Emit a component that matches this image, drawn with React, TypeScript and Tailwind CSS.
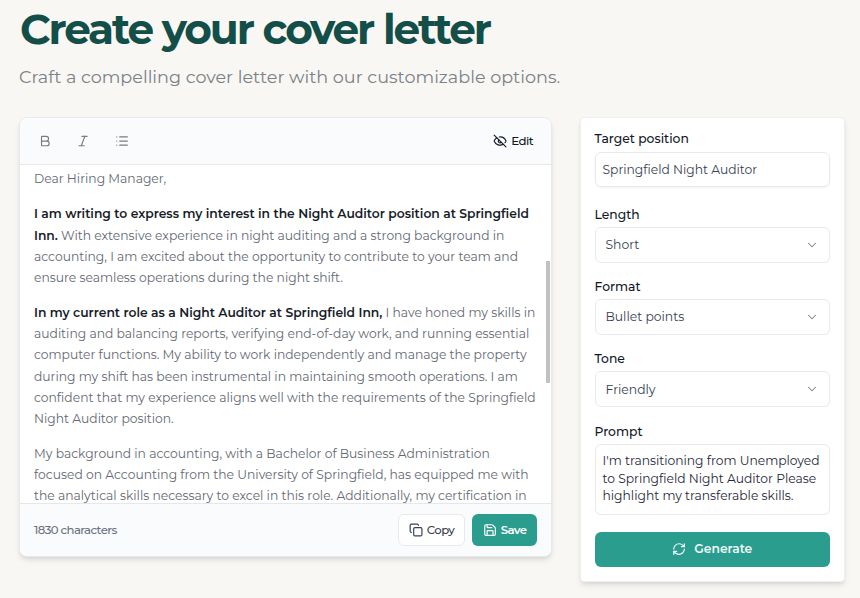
import type { ReactNode } from 'react'
import { Bold, ChevronDown, Copy, EyeOff, Italic, List, RefreshCw, Save } from 'lucide-react'

const selects = [
  { label: 'Length', value: 'Short' },
  { label: 'Format', value: 'Bullet points' },
  { label: 'Tone', value: 'Friendly' },
]

function Field({ label, children }: { label: string; children: ReactNode }) {
  return (
    <div className="flex flex-col gap-[3px]">
      <span className="text-[12.35px] leading-[18px] font-medium text-[#111827]">{label}</span>
      {children}
    </div>
  )
}

function Toolbar() {
  return (
    <div className="flex h-[47px] shrink-0 items-center justify-between border-b border-[#e5e7eb] bg-[#fafbfd] pr-[18px] pl-[17.5px]">
      <div className="flex items-center gap-[24.6px] text-[#7b7c7f]">
        <Bold className="size-[14.1px]" />
        <Italic className="size-[14.1px]" />
        <List className="size-[14.1px]" />
      </div>
      <button
        type="button"
        className="flex items-center gap-1 pt-px text-[11.8px] font-medium tracking-[-0.05em] text-[#111827]"
      >
        <EyeOff className="size-[14.1px]" />
        Edit
      </button>
    </div>
  )
}

function Letter() {
  return (
    <div className="flex min-h-0 flex-1 flex-col gap-[14px] overflow-hidden pt-[3.3px] pl-3.5 text-[12.32px] leading-[21.15px] whitespace-nowrap text-[#636973] [&_strong]:font-semibold [&_strong]:text-[#161c28]">
      <p>Dear Hiring Manager,</p>
      <p>
        <strong>
          I am writing to express my interest in the Night Auditor position at Springfield
          <br />
          Inn.
        </strong>{' '}
        With extensive experience in night auditing and a strong background in
        <br />
        accounting, I am excited about the opportunity to contribute to your team and
        <br />
        ensure seamless operations during the night shift.
      </p>
      <p>
        <strong>In my current role as a Night Auditor at Springfield Inn,</strong> I have honed my
        skills in
        <br />
        auditing and balancing reports, verifying end-of-day work, and running essential
        <br />
        computer functions. My ability to work independently and manage the property
        <br />
        during my shift has been instrumental in maintaining smooth operations. I am
        <br />
        confident that my experience aligns well with the requirements of the Springfield
        <br />
        Night Auditor position.
      </p>
      <p>
        My background in accounting, with a Bachelor of Business Administration
        <br />
        focused on Accounting from the University of Springfield, has equipped me with
        <br />
        the analytical skills necessary to excel in this role. Additionally, my certification in
      </p>
    </div>
  )
}

export default function App() {
  return (
    <div className="h-[598px] w-[860px] overflow-hidden bg-[#f8f7f3] pl-[19px] font-['Montserrat','Inter',sans-serif]">
      <h1 className="ml-px w-fit pt-[5px] text-[42.2px] leading-[48px] font-bold tracking-[-0.05em] whitespace-nowrap text-[#134e48]">
        Create your cover letter
      </h1>
      <p className="mt-3 w-fit text-[17.6px] leading-6 whitespace-nowrap text-[#7c8188]">
        Craft a compelling cover letter with our customizable options.
      </p>
      <main className="mt-7 flex items-start gap-[28px]">
        <section className="relative flex h-[440px] w-[533px] shrink-0 flex-col overflow-hidden rounded-lg border border-[#e8e9ec] bg-white shadow-md">
          <Toolbar />
          <Letter />
          {/* scroll thumb, overlaid on the right edge of the letter */}
          <div className="absolute top-[143px] right-px h-[122px] w-1 bg-[#c1c1c1]" />
          <div className="flex h-[53px] shrink-0 items-center justify-between border-t border-[#e5e7eb] bg-[#fafbfd] pr-3.5 pl-3.5 text-[11.7px] font-medium tracking-[-0.05em]">
            <span className="pt-px text-[#6b7280]">1830 characters</span>
            <div className="flex gap-[7px]">
              <button
                type="button"
                className="flex h-8 w-[67px] items-center justify-center gap-1 rounded-md border border-[#e8e9ec] bg-white pt-px text-[#374151]"
              >
                <Copy className="size-[14.1px]" />
                Copy
              </button>
              <button
                type="button"
                className="flex h-8 w-[65px] items-center justify-center gap-1 rounded-md bg-[#2a9d8f] pt-px font-semibold text-white"
              >
                <Save className="size-[14.1px]" />
                Save
              </button>
            </div>
          </div>
        </section>
        <aside className="flex h-[465px] w-[265px] shrink-0 flex-col rounded border border-[#efefef] bg-white pr-3.5 pl-[13.5px] pt-3 shadow-md">
          <Field label="Target position">
            <div className="mt-px flex h-[35px] items-center rounded-md border border-[#e8e9ec] px-[7px] pt-px text-[12.3px] text-[#374151] shadow-xs">
              Springfield Night Auditor
            </div>
          </Field>
          <div className="mt-[19px] flex flex-col gap-[15.2px]">
            {selects.map(({ label, value }) => (
              <Field key={label} label={label}>
                <button
                  type="button"
                  className="flex h-9 items-center justify-between rounded-md border border-[#e8e9ec] px-2.5 text-[12.35px] text-[#374151]"
                >
                  <span className="pt-px">{value}</span>
                  <ChevronDown className="size-3.5 text-[#7b7f86]" strokeWidth={1.8} />
                </button>
              </Field>
            ))}
            <Field label="Prompt">
              <div className="h-[71px] rounded-md border border-[#e8e9ec] px-[7px] pt-[7.5px] text-[12.3px] leading-[17.6px] whitespace-nowrap text-[#1f2937]">
                I'm transitioning from Unemployed
                <br />
                to Springfield Night Auditor Please
                <br />
                highlight my transferable skills.
              </div>
            </Field>
          </div>
          <button
            type="button"
            className="mt-[17px] flex h-[35px] items-center justify-center gap-2 rounded-md bg-[#2a9d8f] text-[12.3px] font-semibold text-[#eefaf8]"
          >
            <RefreshCw className="size-[14.1px]" />
            <span className="pt-px">Generate</span>
          </button>
        </aside>
      </main>
    </div>
  )
}
